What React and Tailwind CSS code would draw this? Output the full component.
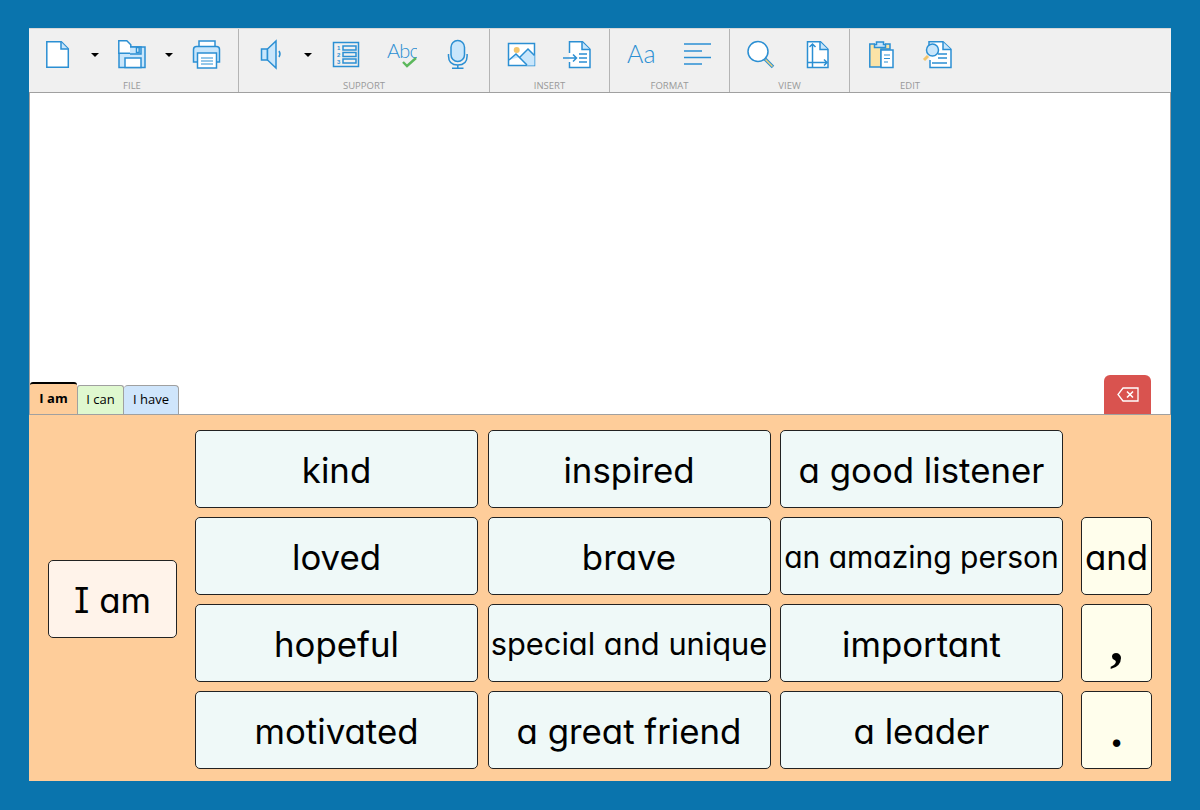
const blue = "#2b8fd3";
const pale = "#c9e6fb";

const Box = ({ children }) => (
  <svg viewBox="0 0 32 32" className="w-8 h-8 shrink-0" fill="none" stroke={blue} strokeWidth="1.5">
    {children}
  </svg>
);

const Arrow = () => (
  <div className="w-[10px] h-8 flex items-center justify-center shrink-0">
    <div className="w-0 h-0 border-x-[4px] border-x-transparent border-t-[4px] border-t-black" />
  </div>
);

const NewDoc = () => (
  <Box>
    <path d="M4.800 2.800h14.500l7 7v18.400H4.800z" fill="#fff" />
    <path d="M19 3v7h7" fill={pale} />
  </Box>
);

const Save = () => (
  <Box>
    <path d="M9 8h20v20.500H3V14" fill={pale} />
    <rect x="9" y="19" width="16" height="9.500" fill="#fff" />
    <path d="M2.800 1.800h8l4 4v8.500h-12z" fill="#fff" />
    <path d="M14 8h11v7H14" fill={pale} />
    <rect x="20.500" y="8.500" width="2.600" height="5" fill="#fff" />
  </Box>
);

const Printer = () => (
  <Box>
    <rect x="9" y="2" width="16" height="6" fill="#fff" />
    <path d="M7 23H3.500V10.500q0-3 3-3h20q3 0 3 3V23H27" fill={pale} />
    <rect x="7.500" y="14" width="19" height="15" fill="#fff" />
    <path d="M11 19h12M11 22h12M11 25h12" strokeWidth="1.200" />
  </Box>
);

const Speaker = () => (
  <Box>
    <rect x="6.500" y="10" width="6" height="11" fill={pale} />
    <path d="M12.500 10L21 2v27l-8.500-8z" fill={pale} />
    <path d="M24 12q2 3 0 6" />
  </Box>
);

const NumList = () => (
  <Box>
    <rect x="4.500" y="3.500" width="25" height="24" />
    <rect x="14" y="7" width="13" height="4" />
    <rect x="14" y="13.500" width="13" height="4" />
    <rect x="14" y="20" width="13" height="4" />
    <g fill={blue} stroke="none" fontSize="6" fontWeight="700" fontFamily="'Liberation Sans', sans-serif">
      <text x="8" y="11">1</text>
      <text x="8" y="18">2</text>
      <text x="8" y="25">3</text>
    </g>
  </Box>
);

const Spell = () => (
  <div className="ml-2">
    <Box>
      <text x="2" y="19" fontSize="20" fill={blue} stroke="none" fontFamily="'Lato', sans-serif" fontWeight="300" letterSpacing="-0.8">Abc</text>
      <path d="M18 23l4 4 9-8" stroke="#5cb85c" strokeWidth="2.400" />
    </Box>
  </div>
);

const Mic = () => (
  <div className="ml-[9px]">
    <Box>
      <rect x="9" y="1.500" width="13.500" height="21" rx="6.700" fill={pale} />
      <path d="M6.500 15v2q0 9 9.300 9t9.300-9v-2M15.800 26v3M10 29.200h11.500" />
    </Box>
  </div>
);

const Picture = () => (
  <Box>
    <rect x="3.500" y="4.500" width="26" height="22" fill="#fff" />
    <path d="M4 21l7-6 11 11.500H29.500V16L23 10 15 18z" fill={pale} stroke="none" />
    <path d="M4 21l7-6 11 11M15 18l8-8 6.500 6.500" />
    <circle cx="11.700" cy="11" r="3" fill="#f3c56b" stroke="none" />
  </Box>
);

const InsertDoc = () => (
  <Box>
    <path d="M8.500 14V2.800h13l7.500 7.500v18.200H8.500V23" fill="#fff" />
    <path d="M21 3v7.500h8" fill={pale} />
    <path d="M2 19h13M12 15.500l3.500 3.500-3.500 3.500M18 15h8M18 19h8M18 23h8" />
  </Box>
);

const FontIcon = () => (
  <Box>
    <text x="2" y="24" fontSize="25" fill={blue} stroke="none" fontFamily="'Lato', sans-serif" fontWeight="300">Aa</text>
  </Box>
);

const AlignLines = () => (
  <Box>
    <path d="M3 5h27M3 12h18M3 18.500h27M3 25h18" />
  </Box>
);

const Search = () => (
  <Box>
    <path d="M20 20l8 8" stroke={blue} strokeWidth="3.500" />
    <path d="M20.500 20.500l7 7" stroke="#f3d27a" strokeWidth="1.500" />
    <circle cx="13" cy="12.500" r="10" fill="#fff" />
  </Box>
);

const PageSize = () => (
  <Box>
    <path d="M6.500 2.800h13l7.500 7.500v18.200H6.500z" fill="#fff" />
    <path d="M19 3v7.500h8" fill={pale} />
    <path d="M11.500 28V5M8.500 8l3-3 3 3M6.500 23.500H26M23 20.500l3 3-3 3" />
  </Box>
);

const Clipboard = () => (
  <Box>
    <path d="M9 5H3.800v23H15V10h9V5h-5" fill="#fbe3a6" />
    <path d="M10.500 5.500V3h7v2.500h2v3h-11v-3z" fill={pale} />
    <rect x="15" y="11" width="12" height="17.500" fill="#fff" />
    <path d="M18 16h6M18 19.500h6M18 23h4" strokeWidth="1.200" />
  </Box>
);

const FindDoc = () => (
  <Box>
    <path d="M7 11V2.800h14l8 7.500v18.200H8V21" fill="#fff" />
    <path d="M21 3v7.500h8" fill={pale} />
    <path d="M16 15h9M16 19h9M10 24h15" />
    <path d="M6 17l-4 4" stroke="#f3c56b" strokeWidth="3" />
    <circle cx="10.500" cy="11" r="6" fill={pale} />
  </Box>
);

const Backspace = () => (
  <svg viewBox="0 0 22 15" className="w-[22px] h-[15px]" fill="none" stroke="#fff" strokeWidth="1.300">
    <path d="M6 1h15v13H6L1 7.500z" />
    <path d="M10 4.500l6 6M16 4.500l-6 6" strokeWidth="1.600" />
  </svg>
);

const groups = [
  { label: "FILE", width: "w-[210px] [&>div:last-child]:pr-[3px]", cls: "pl-[13px] gap-4", items: [<NewDoc key="a" />, <Arrow key="b" />, <Save key="c" />, <Arrow key="d" />, <Printer key="e" />] },
  { label: "SUPPORT", width: "w-[251px]", cls: "pl-[16px] gap-4", items: [<Speaker key="a" />, <Arrow key="b" />, <NumList key="c" />, <Spell key="d" />, <Mic key="e" />] },
  { label: "INSERT", width: "w-[120px]", cls: "pl-[15px] gap-6", items: [<Picture key="a" />, <InsertDoc key="b" />] },
  { label: "FORMAT", width: "w-[120px]", cls: "pl-[15px] gap-6", items: [<FontIcon key="a" />, <AlignLines key="b" />] },
  { label: "VIEW", width: "w-[120px]", cls: "pl-[15px] gap-6", items: [<Search key="a" />, <PageSize key="b" />] },
  { label: "EDIT", width: "w-[120px]", cls: "pl-[16px] gap-6", items: [<Clipboard key="a" />, <FindDoc key="b" />], last: true },
];

const words = [
  ["kind", "inspired", "a good listener"],
  ["loved", "brave", "an amazing person"],
  ["hopeful", "special and unique", "important"],
  ["motivated", "a great friend", "a leader"],
];

const handFont = "font-['Inter',sans-serif] font-[380] [font-feature-settings:'cv11','cv08']";

const Card = ({ children, tint = "bg-[#eff9f8]", size = "text-[34.800px]", font = handFont }) => (
  <div className={`h-[78px] pt-[3px] rounded-[5px] border border-[#222] flex items-center justify-center whitespace-nowrap text-black overflow-hidden ${tint} ${size} ${font}`}>
    {children}
  </div>
);

const wordSize = (w) => (w === "an amazing person" ? "text-[30px]" : w === "special and unique" ? "text-[30.800px]" : "text-[34.800px]");

export default function App() {
  return (
    <div className="w-[1200px] h-[810px] bg-[#0a74ad] pt-[28px] pl-[29px] overflow-hidden">
      <div className="w-[1142px] h-[753px] flex flex-col">
        <div className="h-[65px] bg-[#f0f0f0] border-t border-[#d8d8d8] border-b border-b-[#a0a0a0] flex font-['Open_Sans',sans-serif]">
          {groups.map((g) => (
            <div key={g.label} className={`h-full flex flex-col justify-between pt-[10px] ${g.width} ${g.last ? "" : "border-r border-[#b4b4b4]"}`}>
              <div className={`flex ${g.cls}`}>{g.items}</div>
              <div className="text-[9.500px] leading-[13px] text-[#999] text-center">{g.label}</div>
            </div>
          ))}
        </div>
        <div className="h-[321px] bg-white border-x border-[#a0a0a0] flex items-end justify-between pr-[19px] font-['Open_Sans',sans-serif]">
          <div className="flex items-end">
            <div className="w-[47px] h-[32px] bg-[#fecd9a] border-t-2 border-black rounded-t-[3px] text-[13px] font-bold text-black flex items-center justify-center">I am</div>
            <div className="w-[47px] h-[29px] bg-[#dff8cf] border border-b-0 border-[#a0a0a0] rounded-t-[3px] text-[13px] text-black flex items-center justify-center">I can</div>
            <div className="w-[55px] h-[29px] bg-[#cfe5fb] border border-b-0 border-l-0 border-[#a0a0a0] rounded-t-[4px] text-[13px] text-black flex items-center justify-center">I have</div>
          </div>
          <div className="w-[47px] h-[39px] bg-[#d9534f] rounded-t-[6px] flex items-center justify-center">
            <Backspace />
          </div>
        </div>
        <div className="flex-1 bg-[#fecd9a] border-t border-[#a0a0a0] flex items-center pt-[2px] pl-[19px] gap-[18px]">
          <div className="w-[129px]">
            <Card tint="bg-[#fff3ea]">I am</Card>
          </div>
          <div className="grid grid-cols-[repeat(3,283px)] gap-x-[9.500px] gap-y-[9px]">
            {words.flat().map((w) => (
              <Card key={w} size={wordSize(w)}>{w}</Card>
            ))}
          </div>
          <div className="w-[71px] flex flex-col gap-[9px] pt-[87px]">
            <Card tint="bg-[#fffeec]">and</Card>
            <Card tint="bg-[#fffeec]" size="text-[52px] font-bold" font="font-['Liberation_Serif',serif]">,</Card>
            <Card tint="bg-[#fffeec]" size="text-[44px] font-bold">.</Card>
          </div>
        </div>
      </div>
    </div>
  );
}
